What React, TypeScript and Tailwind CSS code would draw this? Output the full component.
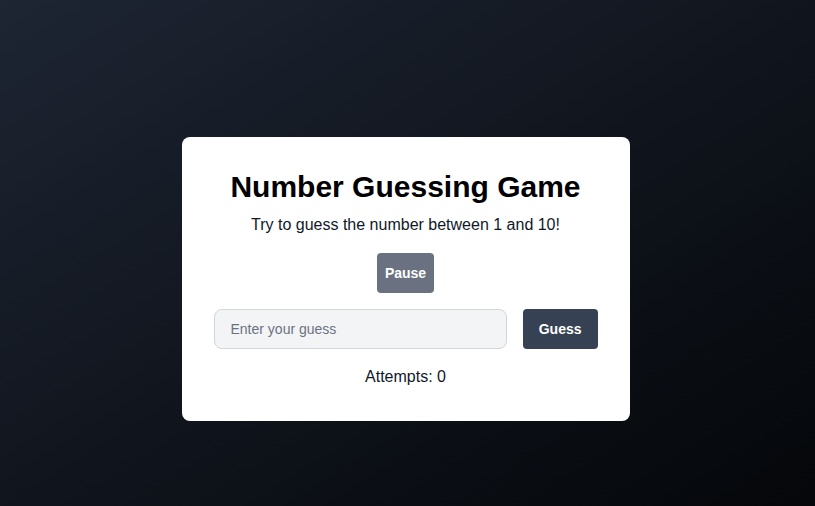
import React, { useState } from 'react';

const App: React.FC = () => {
    const [guess, setGuess] = useState('');
    const [attempts, setAttempts] = useState(0);

    return (
        <div className="w-full h-screen flex items-center justify-center pt-[52px] pr-[4px] bg-gradient-to-br from-[#1e2533] to-[#05070a] font-['Liberation_Sans',Arial,sans-serif]">
            {/* Game card */}
            <div className="w-[448px] bg-white rounded-lg p-8 text-center">
                <h1 className="text-3xl font-bold text-black mb-2">Number Guessing Game</h1>
                <p className="text-base text-gray-900 mb-4">Try to guess the number between 1 and 10!</p>

                <button className="bg-gray-500 text-white text-sm font-bold px-2 py-2.5 rounded mb-4">
                    Pause
                </button>

                {/* Guess row */}
                <div className="flex gap-4">
                    <input
                        type="number"
                        value={guess}
                        onChange={(e) => setGuess(e.target.value)}
                        placeholder="Enter your guess"
                        className="flex-1 h-10 px-4 bg-gray-100 border border-gray-300 rounded-lg text-sm text-gray-800 placeholder:text-gray-500 outline-none"
                    />
                    <button
                        className="bg-gray-700 text-white text-sm font-bold px-4 h-10 rounded"
                        onClick={() => setAttempts(attempts + 1)}
                    >
                        Guess
                    </button>
                </div>

                <p className="mt-4 text-base text-gray-900">Attempts: {attempts}</p>
            </div>
        </div>
    );
};

export default App;
